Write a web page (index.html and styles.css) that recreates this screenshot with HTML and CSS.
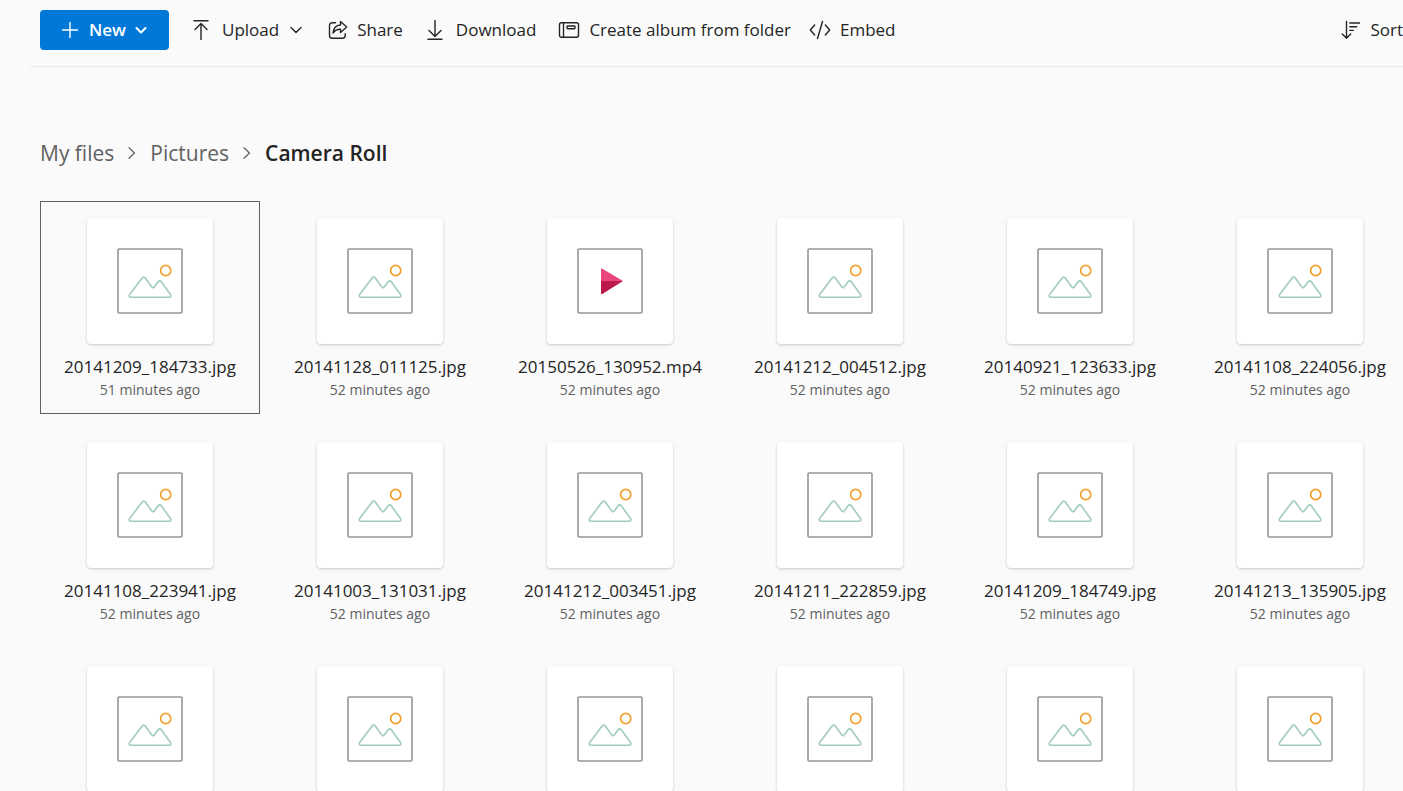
FILE: index.html
```html
<!DOCTYPE html>
<html lang="en">
<head>
<meta charset="utf-8">
<title>Camera Roll</title>
<link rel="stylesheet" href="styles.css">
</head>
<body>
<svg class="sprite" aria-hidden="true">
  <symbol id="photo" viewBox="0 0 66 66">
    <rect x="1" y="1" width="64" height="64" rx="1" fill="#fff" stroke="#979797" stroke-width="1.6"/>
    <circle cx="48.700" cy="22.500" r="5.100" fill="none" stroke="#f2a02e" stroke-width="1.700"/>
    <path d="M14 49.200h38.200c1.600 0 2.200-1.400 1.300-2.600L44.300 33.800c-.9-1.300-2.300-1.300-3.200 0l-3.700 5c-.9 1.200-1.800 1.200-2.700 0L28.300 30c-1-1.300-2.200-1.300-3.200 0L12.700 46.400c-1 1.400-.3 2.800 1.300 2.800z" fill="none" stroke="#a3ccc0" stroke-width="1.600"/>
  </symbol>
  <symbol id="video" viewBox="0 0 66 66">
    <rect x="1" y="1" width="64" height="64" rx="1" fill="#fff" stroke="#979797" stroke-width="1.600"/>
    <path d="M24 33V21.500c0-1 .6-1.200 1.400-.8L46 33z" fill="#e8467c"/>
    <path d="M24 33v12.200c0 1 .6 1.200 1.400.8L46 33z" fill="#bd1a4c"/>
  </symbol>
</svg>
<header class="toolbar">
  <button class="command primary" type="button">
    <svg class="icon" viewBox="0 0 20 20"><path d="M10 2.500v15M2.500 10h15"/></svg>
    <span>New</span>
    <svg class="chevron bold" viewBox="0 0 12 12"><path d="M1.500 4 6 8.500 10.500 4"/></svg>
  </button>
  <button class="command upload" type="button">
    <svg class="icon" viewBox="0 0 20 20"><path d="M3 .7h14M10 19.500V3.500M4 9.500l6-6 6 6"/></svg>
    <span>Upload</span>
    <svg class="chevron" viewBox="0 0 12 12"><path d="M1 3.500 6 8.500l5-5"/></svg>
  </button>
  <button class="command" type="button">
    <svg class="icon" viewBox="0 0 20 20"><path d="M7.500 2.800H4.200a2.700 2.700 0 0 0-2.700 2.700v10a2.700 2.700 0 0 0 2.700 2.700h10.300a2.700 2.700 0 0 0 2.700-2.700v-1.800M12.500 1.500l6.200 5.500-6.200 5.500V9.300c-3-.3-5.300.8-7.500 3.700.4-4.700 3-7.700 7.500-8z"/></svg>
    <span>Share</span>
  </button>
  <button class="command download" type="button">
    <svg class="icon" viewBox="0 0 20 20"><path d="M3 19.300h14M10 .5v16M4 10.500l6 6 6-6"/></svg>
    <span>Download</span>
  </button>
  <button class="command album" type="button">
    <svg class="icon wide" viewBox="0 0 22 20"><rect x="1.500" y="2.700" width="19" height="14.600" rx="2"/><path d="M5.500 2.700v14.600"/><rect x="9" y="6" width="8" height="2.800" rx=".7"/></svg>
    <span>Create album from folder</span>
  </button>
  <button class="command" type="button">
    <svg class="icon wide" viewBox="0 0 22 20"><path d="M5.700 5 1.300 10l4.400 5M13.500 1.500l-5 17M16.300 5l4.400 5-4.400 5"/></svg>
    <span>Embed</span>
  </button>
  <button class="command sort" type="button">
    <svg class="icon" viewBox="0 0 20 20"><path d="M5.500 1.500V18M1.300 14l4.200 4.200L9.700 14M8.800 3h9.700M8.800 6.700h7M8.800 10.400h3.500"/></svg>
    <span>Sort</span>
  </button>
</header>
<main class="content">
  <nav class="breadcrumb" aria-label="Breadcrumb">
    <a href="#">My files</a>
    <svg class="separator" viewBox="0 0 12 12"><path d="M3 .7 8.500 6 3 11.300"/></svg>
    <a href="#">Pictures</a>
    <svg class="separator" viewBox="0 0 12 12"><path d="M3 .7 8.500 6 3 11.300"/></svg>
    <h1>Camera Roll</h1>
  </nav>
  <ul class="files" id="files"></ul>
</main>
<script src="app.js"></script>
</body>
</html>
```
FILE: styles.css
```css
* {
  box-sizing: border-box;
}

body {
  margin: 0;
  height: 100vh;
  overflow: hidden;
  background: #fafafa;
  color: #242424;
  font-family: "Open Sans", "Noto Sans", sans-serif;
}

.sprite {
  display: none;
}

.toolbar {
  display: flex;
  align-items: center;
  margin-left: 30px;
  padding: 10px 0 16px 10px;
  border-bottom: 1px solid #e8e8e8;
}

.command {
  display: flex;
  align-items: center;
  gap: 9px;
  height: 40px;
  margin: 0 22px 0 0;
  padding: 0;
  border: 0;
  background: transparent;
  color: inherit;
  font: 17px/24px "Open Sans", "Noto Sans", sans-serif;
  white-space: nowrap;
}

.primary {
  padding: 0 22px 0 20px;
  border-radius: 4px;
  background: #0078d7;
  color: #fff;
  font-weight: 600;
}

.upload,
.download {
  gap: 11px;
}

.upload {
  margin-right: 26px;
}

.album {
  margin-right: 18px;
}

.sort {
  margin: 0 0 0 auto;
}

.icon {
  flex: none;
  width: 20px;
  height: 20px;
}

.wide {
  width: 22px;
}

.icon,
.chevron,
.separator {
  fill: none;
  stroke: currentColor;
  stroke-width: 1.4;
  stroke-linecap: round;
  stroke-linejoin: round;
}

.chevron {
  width: 12px;
  height: 12px;
}

.bold {
  stroke-width: 2;
}

.content {
  padding: 70px 0 0 40px;
}

.breadcrumb {
  display: flex;
  align-items: center;
  gap: 12px;
  margin-bottom: 32px;
  color: #616161;
  font-size: 21px;
  line-height: 32px;
}

.breadcrumb a {
  color: inherit;
  text-decoration: none;
}

.breadcrumb h1 {
  margin: 0;
  color: #242424;
  font-size: 21px;
  font-weight: 600;
}

.separator {
  width: 12px;
  height: 12px;
  stroke-width: 1.2;
}

.files {
  display: grid;
  grid-template-columns: repeat(6, minmax(220px, 1fr));
  gap: 11px 10px;
  margin: 0;
  padding: 0;
  list-style: none;
}

.tile {
  display: flex;
  flex-direction: column;
  align-items: center;
  min-height: 213px;
  padding: 16px 0 12px;
  border: 1px solid transparent;
}

.focused {
  border-color: #616161;
}

.thumb {
  display: grid;
  place-items: center;
  width: 126px;
  height: 126px;
  margin-bottom: 11px;
  border-radius: 4px;
  background: #fff;
  box-shadow: 0 1px 3px rgba(0, 0, 0, 0.2);
}

.thumb svg {
  width: 66px;
  height: 66px;
}

.name {
  font-size: 17px;
  line-height: 24px;
}

.time {
  color: #616161;
  font-size: 14px;
  line-height: 22px;
}
```
FILE: app.js
```js
const files = [
  ["20141209_184733.jpg", "51 minutes ago"],
  ["20141128_011125.jpg", "52 minutes ago"],
  ["20150526_130952.mp4", "52 minutes ago"],
  ["20141212_004512.jpg", "52 minutes ago"],
  ["20140921_123633.jpg", "52 minutes ago"],
  ["20141108_224056.jpg", "52 minutes ago"],
  ["20141108_223941.jpg", "52 minutes ago"],
  ["20141003_131031.jpg", "52 minutes ago"],
  ["20141212_003451.jpg", "52 minutes ago"],
  ["20141211_222859.jpg", "52 minutes ago"],
  ["20141209_184749.jpg", "52 minutes ago"],
  ["20141213_135905.jpg", "52 minutes ago"],
  [], [], [], [], [], []
];

document.getElementById("files").innerHTML = files.map(([name, time], i) => `
  <li class="tile${i === 0 ? " focused" : ""}">
    <div class="thumb"><svg><use href="#${name && name.endsWith(".mp4") ? "video" : "photo"}"/></svg></div>
    ${name ? `<span class="name">${name}</span><span class="time">${time}</span>` : ""}
  </li>`).join("");
```
